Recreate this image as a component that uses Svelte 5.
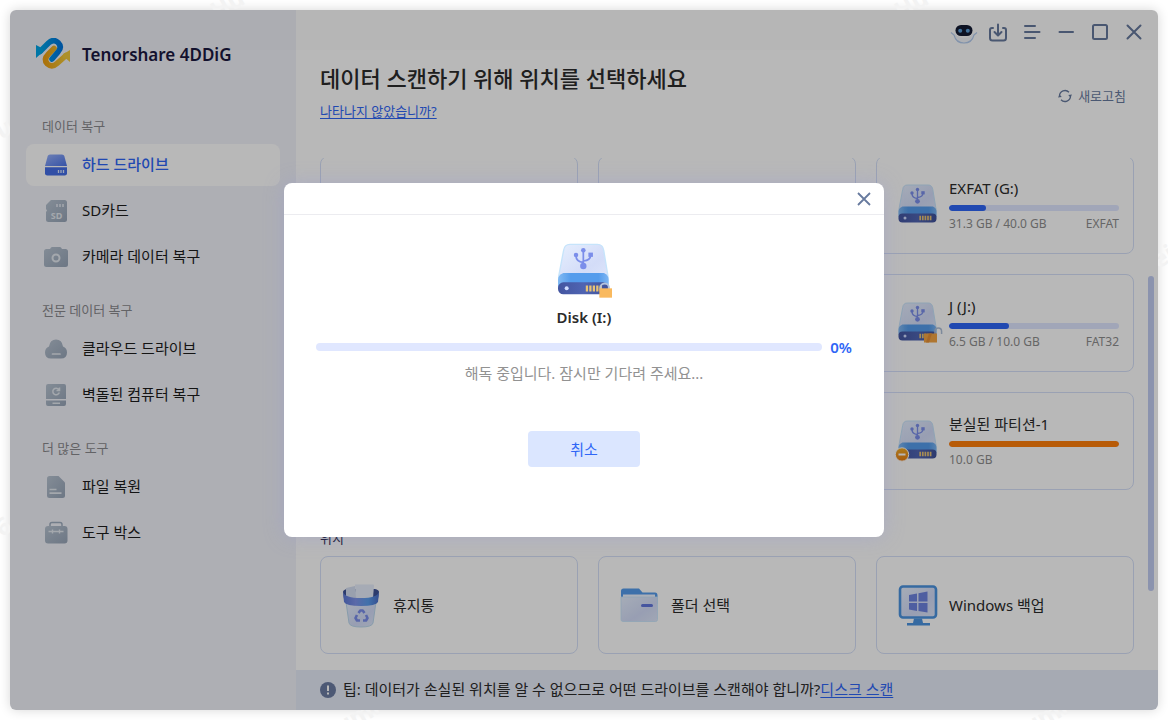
<svelte:head>
  <title>Tenorshare 4DDiG</title>
</svelte:head>

<script>
  const groups = [
    {
      label: '데이터 복구',
      items: [
        { icon: 'drive', text: '하드 드라이브' },
        { icon: 'sd', text: 'SD카드' },
        { icon: 'camera', text: '카메라 데이터 복구' }
      ]
    },
    {
      label: '전문 데이터 복구',
      items: [
        { icon: 'cloud', text: '클라우드 드라이브' },
        { icon: 'computer', text: '벽돌된 컴퓨터 복구' }
      ]
    },
    {
      label: '더 많은 도구',
      items: [
        { icon: 'file', text: '파일 복원' },
        { icon: 'toolbox', text: '도구 박스' }
      ]
    }
  ];

  // null keeps an empty cell in the grid
  const disks = [
    null,
    null,
    { name: 'EXFAT (G:)', size: '31.3 GB / 40.0 GB', fs: 'EXFAT', used: 22 },
    null,
    null,
    { name: 'J (J:)', size: '6.5 GB / 10.0 GB', fs: 'FAT32', used: 35, badge: 'unlocked' },
    null,
    null,
    { name: '분실된 파티션-1', size: '10.0 GB', fs: '', used: 100, badge: 'lost' }
  ];

  const locations = [
    { icon: 'bin', text: '휴지통' },
    { icon: 'folder', text: '폴더 선택' },
    { icon: 'windows', text: 'Windows 백업' }
  ];

  let active = 'drive';
  let decrypting = true;
  let progress = 0;

  function closeDialog() {
    decrypting = false;
  }
</script>

{#snippet drive(badge)}
  <svg class="drive" viewBox="0 0 42 42" aria-hidden="true">
    <path d="M10.5 1h20.5q4.200 0 4.800 4.500L39 25v6H2v-6L5.700 5.500Q6.300 1 10.500 1Z" fill="url(#glass)" stroke="#c6e4fb" stroke-width="1" />
    <path d="M5.500 22.500h30.500q3.500 1.500 3.500 5V33H1.500v-5.500q0-3.500 4-5Z" fill="url(#band)" />
    <rect x="1.500" y="29.500" width="38" height="9" rx="4" fill="url(#base)" />
    <circle cx="8" cy="34" r="1.500" fill="#cfdcff" />
    <path d="M23.200 31.800v4.500M25.800 31.800v4.500M28.400 31.800v4.500M31 31.800v4.500M33.600 31.800v4.500" stroke="#e8c274" stroke-width="1.700" />
    <g fill="none" stroke="#7b8eea" stroke-width="1.300">
      <path d="M20.500 5v11M20.500 14.500q-5.500-.5-5.500-5M20.500 13.500q5.500-.5 5.500-4.500" />
    </g>
    <g fill="#7b8eea">
      <circle cx="20.500" cy="17.300" r="2.400" />
      <circle cx="20.500" cy="5.500" r="1.700" />
      <circle cx="15" cy="9" r="1.700" />
      <rect x="24.300" y="7.200" width="3.400" height="3.200" />
    </g>
    {#if badge === 'locked'}
      <circle cx="36.500" cy="33.500" r="3.200" fill="none" stroke="#b4c3dd" stroke-width="1.500" />
      <rect x="32.500" y="34" width="9.500" height="7" fill="#f9b95e" />
    {:else if badge === 'unlocked'}
      <path d="M38 32v-2.500q0-3.500 3.300-3.500t3.300 3.500v2.500" fill="none" stroke="#aebfd8" stroke-width="1.500" />
      <rect x="27" y="31.500" width="13" height="9" fill="#f3a443" />
      <path d="M32 31.500h3l-3 9h-3Z" fill="#e58f37" />
    {:else if badge === 'lost'}
      <circle cx="5" cy="34.500" r="6.700" fill="url(#orange)" stroke="#fff" stroke-width="1" />
      <path d="M1.500 34.500h7" stroke="#fff" stroke-width="2" />
    {/if}
  </svg>
{/snippet}

{#snippet navIcon(name)}
  <svg width="26" height="26" viewBox="0 0 26 26" aria-hidden="true">
    {#if name === 'drive'}
      <path d="M7 2.500h12q1.800 0 2.300 1.500L24 14H2L4.700 4q.5-1.500 2.300-1.500Z" fill="url(#navtop)" />
      <path d="M2 15.200h22v6q0 2.300-2.300 2.300H4.300Q2 23.500 2 21.200Z" fill="#446ee6" />
      <path d="M15.500 18v3M18 18v3M20.500 18v3" stroke="#dce6ff" stroke-width="1.300" />
    {:else if name === 'sd'}
      <path d="M8 2h13.500Q24 2 24 4.500v17q0 2.500-2.500 2.500h-16Q3 24 3 21.500V14l1-1.500-1-1.500V7Z" fill="url(#slate)" />
      <path d="M14 6v3M17 6v3M20 6v3" stroke="#e4e9f0" stroke-width="1.500" />
      <text x="13.500" y="20.500" text-anchor="middle" class="sd">SD</text>
    {:else if name === 'camera'}
      <path d="M7 5l1-1.500q.5-.5 1-.5h8q.5 0 1 .5L19 5h3.500Q25 5 25 7.500v13q0 2.500-2.500 2.500h-19Q1 23 1 20.500v-13Q1 5 3.500 5Z" fill="url(#slate)" />
      <circle cx="13" cy="14" r="3.500" fill="none" stroke="#e4e9f0" stroke-width="2" />
    {:else if name === 'cloud'}
      <path d="M8 22.500q-6 0-6-6 0-4.500 4-6 1-7 7-7t7 7q4 1.500 4 6 0 6-6 6Z" fill="url(#slate)" />
      <path d="M9.500 18h7.500" stroke="#e4e9f0" stroke-width="1.700" stroke-linecap="round" />
    {:else if name === 'computer'}
      <path d="M5 2h16q2 0 2 2v13H3V4q0-2 2-2ZM3 18.500h20V22q0 2-2 2H5q-2 0-2-2Z" fill="url(#slate)" />
      <path d="M15.800 7.500a3.300 3.300 0 1 0 .5 3M16.500 5.500V8.500H13.500M9.500 21.200h7.500" fill="none" stroke="#e4e9f0" stroke-width="1.500" />
    {:else if name === 'file'}
      <path d="M6.500 2h9L22 8.500v13q0 2.500-2.500 2.500h-13Q4 24 4 21.500v-17Q4 2 6.500 2Z" fill="url(#slate)" />
      <path d="M6.500 15.500h7M6.500 19.200h12" stroke="#e4e9f0" stroke-width="1.700" />
    {:else if name === 'toolbox'}
      <path d="M7 6V4.500Q7 2.500 9 2.500h8q2 0 2 2V6" fill="none" stroke="#9fadbf" stroke-width="1.500" />
      <rect x="2" y="6" width="22.500" height="17.500" rx="3" fill="url(#slate)" />
      <path d="M5.500 11.500h15M9.500 9.500v4M16.500 9.500v4" stroke="#e4e9f0" stroke-width="1.400" />
    {/if}
  </svg>
{/snippet}

{#snippet locationIcon(name)}
  <svg class="drive" viewBox="0 0 42 42" aria-hidden="true">
    {#if name === 'bin'}
      <path d="M2 8q0-2 4-3h28q4 1 4 3l-1 7H3Z" fill="#3e5297" />
      <path d="M5 4l9-2 2 13H5Z" fill="#d5def2" />
      <path d="M14 .5h18q1 0 1 1L32 14H15Z" fill="#e6edfb" />
      <path d="M5 18h30l-3 21q-1 4-12 4T8 39Z" fill="url(#glass)" stroke="#bcd9ee" stroke-width="1" />
      <path d="M2 8q2 6 18 6t18-6l-1 10q-2 4-17 4T3 18Z" fill="url(#rim)" />
      <g fill="none" stroke="#7b8eea" stroke-width="2.600" stroke-linejoin="round">
        <path d="M17.500 29l1.800-2.500h2.400l1.800 2.500" />
        <path d="M25 31l1.500 3-1.500 2.500h-3" />
        <path d="M19 36.500h-3L14.500 34l1.500-3" />
      </g>
    {:else if name === 'folder'}
      <path d="M2 7q0-2.500 2.500-2.500H20l3.500 4H36q2.500 0 2.500 3V20H2Z" fill="#559cec" />
      <path d="M4 10.500h32v5H4Z" fill="#eef3ff" />
      <path d="M2 13h36.500v22.500q0 2-2 2H4q-2 0-2-2Z" fill="url(#glass)" stroke="#c6e4fb" stroke-width=".8" />
      <path d="M23.500 21.500h9" stroke="#6176dd" stroke-width="3" stroke-linecap="round" />
    {:else}
      <rect x="3" y="2.500" width="36" height="31" rx="3" fill="url(#glass)" stroke="#4c94e0" stroke-width="2.600" />
      <path d="M17 34.500h8l1 4.500h7v2.500H10V39h6Z" fill="#4c94e0" />
      <path d="M12 11l8-1.500v8h-8ZM21.500 9.200L30.500 7.500v10h-9ZM12 19h8v8l-8-1.500ZM21.500 19h9v9.500l-9-1.500Z" fill="#6d83df" />
    {/if}
  </svg>
{/snippet}

<svg class="defs" width="0" height="0" aria-hidden="true">
  <defs>
    <linearGradient id="glass" x1="0" y1="0" x2="1" y2="1">
      <stop offset="0" stop-color="#e6effe" />
      <stop offset=".6" stop-color="#d3dcf8" />
      <stop offset="1" stop-color="#dfe7fb" />
    </linearGradient>
    <linearGradient id="band" x1="0" y1="0" x2="1" y2="0">
      <stop offset="0" stop-color="#82baf3" />
      <stop offset=".25" stop-color="#559cec" />
      <stop offset=".8" stop-color="#559cec" />
      <stop offset="1" stop-color="#7db6f3" />
    </linearGradient>
    <linearGradient id="base" x1="0" y1="0" x2="1" y2="0">
      <stop offset="0" stop-color="#4355a0" />
      <stop offset=".5" stop-color="#4f64b2" />
      <stop offset="1" stop-color="#3f5199" />
    </linearGradient>
    <linearGradient id="rim" x1="0" y1="0" x2="1" y2="0">
      <stop offset="0" stop-color="#5b78d6" />
      <stop offset=".35" stop-color="#7e93ea" />
      <stop offset=".7" stop-color="#5a9ded" />
      <stop offset="1" stop-color="#4a6dc9" />
    </linearGradient>
    <linearGradient id="orange" x1="0" y1="0" x2="0" y2="1">
      <stop offset="0" stop-color="#f2ac25" />
      <stop offset="1" stop-color="#e77c11" />
    </linearGradient>
    <linearGradient id="navtop" x1="0" y1="0" x2="1" y2="1">
      <stop offset="0" stop-color="#98b2fb" />
      <stop offset="1" stop-color="#4c74e8" />
    </linearGradient>
    <linearGradient id="slate" x1="0" y1="0" x2="1" y2="1">
      <stop offset="0" stop-color="#b7c3d1" />
      <stop offset="1" stop-color="#97a5b8" />
    </linearGradient>
    <linearGradient id="logoblue" x1="0" y1="0" x2="1" y2="0">
      <stop offset="0" stop-color="#00a5e8" />
      <stop offset="1" stop-color="#0078e0" />
    </linearGradient>
    <linearGradient id="logogold" x1="0" y1="0" x2="1" y2="0">
      <stop offset="0" stop-color="#eda012" />
      <stop offset="1" stop-color="#f0c83a" />
    </linearGradient>
  </defs>
</svg>

<div class="desktop">
  <div class="watermark" aria-hidden="true">
    <span class="mark mark--a">Hu</span>
    <span class="mark mark--b">Hu</span>
    <span class="mark mark--c">u</span>
    <span class="mark mark--d">ei</span>
    <span class="mark mark--e">6</span>
    <span class="mark mark--f">umi</span>
    <span class="mark mark--g">umi</span>
  </div>

  <div class="window">
    <aside class="sidebar">
      <div class="brand">
        <svg width="36" height="34" viewBox="0 2 36 34" aria-hidden="true">
          <g fill="none" stroke-width="5.600" stroke-linecap="round">
            <path d="M18 12.500L12.500 18Q7 23.500 11.500 28q4.500 4 9.500-.5l9-8" stroke="url(#logogold)" />
            <path d="M4 15.500l8.500-8.500q5-4.500 9.500-.5 4.500 4.500 0 9.500l-6 7" stroke="url(#logoblue)" />
          </g>
          <path d="M0 9l3 1.500L7 13v3.500l-3 2L0 22Z" fill="#00a5e8" />
          <path d="M34 14v12l-3.500-3-3.500-1.500V18l3-1.500Z" fill="#f0c83a" />
        </svg>
        <span>Tenorshare 4DDiG</span>
      </div>
      <nav>
        {#each groups as group}
          <section class="group">
            <h2>{group.label}</h2>
            {#each group.items as item}
              <button
                type="button"
                class="nav-item"
                class:active={active === item.icon}
                on:click={() => (active = item.icon)}
              >
                {@render navIcon(item.icon)}
                <span>{item.text}</span>
              </button>
            {/each}
          </section>
        {/each}
      </nav>
    </aside>

    <main class="content">
      <div class="topbar">
        <button type="button" aria-label="Assistant">
          <svg width="28" height="24" viewBox="0 0 28 24">
            <path d="M2.500 12.500L4 14.500Q5.500 23.500 14 23.500T24 14.500l1.500-2-3 1.500Q20 18 14 18t-8.500-4Z" fill="#f4f7fd" />
            <path d="M1 12.500l3 2.500q2 8 10 8t10-8l3-2.500" fill="none" stroke="#b5cdf0" stroke-width="1.100" />
            <rect x="5.500" y="5" width="17" height="11" rx="5.500" fill="#141b33" />
            <circle cx="10.200" cy="10.700" r="2" fill="#5c9fd8" />
            <circle cx="17.800" cy="10.700" r="2" fill="#5c9fd8" />
          </svg>
        </button>
        <button type="button" aria-label="Download">
          <svg width="24" height="24" viewBox="0 0 24 24">
            <path d="M7 8H6q-2 0-2 2v8q0 2.500 2.500 2.500h11Q20 20.500 20 18v-8q0-2-2-2h-1M12 4.500v10.500M8.500 12l3.500 3.500 3.500-3.500" />
          </svg>
        </button>
        <button type="button" aria-label="Menu">
          <svg width="24" height="24" viewBox="0 0 24 24">
            <path d="M5 6h10M5 12h14.500M5 18h10" />
          </svg>
        </button>
        <button type="button" aria-label="Minimize">
          <svg width="24" height="24" viewBox="0 0 24 24"><path d="M5.500 12h13.500" /></svg>
        </button>
        <button type="button" aria-label="Maximize">
          <svg width="24" height="24" viewBox="0 0 24 24">
            <rect x="5" y="5" width="14" height="14" rx="1.500" />
          </svg>
        </button>
        <button type="button" aria-label="Close">
          <svg width="24" height="24" viewBox="0 0 24 24"><path d="M5.500 5.500l13 13M18.500 5.500l-13 13" /></svg>
        </button>
      </div>

      <header class="heading">
        <div>
          <h1>데이터 스캔하기 위해 위치를 선택하세요</h1>
          <a href="#help">나타나지 않았습니까?</a>
        </div>
        <button type="button" class="refresh">
          <svg width="14" height="14" viewBox="0 0 14 14" aria-hidden="true">
            <path d="M1.500 7a5.500 5.500 0 0 1 9.500-3.700M12.500 7A5.500 5.500 0 0 1 3 10.700" fill="none" stroke="#677a9e" stroke-width="1.300" />
            <path d="M0 8.500L1.500 5.500 3.800 8ZM14 5.500l-1.500 3L10.200 6Z" fill="#677a9e" />
          </svg>
          새로고침
        </button>
      </header>

      <div class="scroller">
        <div class="list">
          <div class="grid">
            {#each disks as disk}
              <article class="card">
                {#if disk}
                  {@render drive(disk.badge)}
                  <div class="info">
                    <h3>{disk.name}</h3>
                    <div class="bar">
                      <div class="bar__fill" class:lost={disk.badge === 'lost'} style="width: {disk.used}%"></div>
                    </div>
                    <p><span>{disk.size}</span><span>{disk.fs}</span></p>
                  </div>
                {/if}
              </article>
            {/each}
          </div>
          <h2 class="section-title">위치</h2>
          <div class="grid">
            {#each locations as location}
              <article class="card">
                {@render locationIcon(location.icon)}
                <h3>{location.text}</h3>
              </article>
            {/each}
          </div>
        </div>
        <div class="thumb"></div>
      </div>

      <footer class="tip">
        <svg width="16" height="16" viewBox="0 0 16 16" aria-hidden="true">
          <circle cx="8" cy="8" r="8" fill="#6b7ca3" />
          <path d="M8 3.500v5.500M8 10.500v2" stroke="#fff" stroke-width="2" />
        </svg>
        <p>팁: 데이터가 손실된 위치를 알 수 없으므로 어떤 드라이브를 스캔해야 합니까?<a href="#scan">디스크 스캔</a></p>
      </footer>
    </main>

    {#if decrypting}
      <div class="overlay">
        <div class="dialog" role="dialog" aria-modal="true" aria-labelledby="dialog-title">
          <div class="dialog__bar">
            <button type="button" aria-label="Close dialog" on:click={closeDialog}>
              <svg width="16" height="16" viewBox="0 0 16 16">
                <path d="M2 2l12 12M14 2L2 14" fill="none" stroke="#677a9e" stroke-width="1.800" />
              </svg>
            </button>
          </div>
          <div class="dialog__body">
            {@render drive('locked')}
            <h2 id="dialog-title">Disk (I:)</h2>
            <div class="progress">
              <div class="progress__track">
                <div class="progress__fill" style="width: {progress}%"></div>
              </div>
              <strong>{progress}%</strong>
            </div>
            <p>해독 중입니다. 잠시만 기다려 주세요...</p>
            <button type="button" class="cancel" on:click={closeDialog}>취소</button>
          </div>
        </div>
      </div>
    {/if}
  </div>
</div>

<style>
  :global(body) {
    background: #fff;
  }

  h1,
  h2,
  h3,
  p {
    margin: 0;
    font-weight: 400;
  }

  button {
    padding: 0;
    border: none;
    background: none;
    font: inherit;
    color: inherit;
    cursor: pointer;
  }

  a {
    color: #2f66f6;
    text-underline-offset: 2px;
  }

  .defs {
    position: absolute;
  }

  .desktop {
    position: relative;
    display: flex;
    box-sizing: border-box;
    min-height: 100vh;
    padding: 10px;
    overflow: hidden;
    font-family: 'Noto Sans', 'Noto Sans CJK KR', sans-serif;
    font-size: 15px;
    line-height: 20px;
    color: #2b2b2b;
  }

  .desktop::before {
    content: '';
    position: absolute;
    inset: 10px;
    border-radius: 6px;
    box-shadow: 0 0 12px rgba(0, 0, 0, 0.16);
  }

  .mark {
    position: absolute;
    font-size: 24px;
    font-weight: 700;
    line-height: 24px;
    color: #f3f3f3;
    transform: rotate(-30deg);
  }

  .mark--a {
    left: 210px;
    top: -8px;
  }

  .mark--b {
    left: 894px;
    top: -8px;
  }

  .mark--c {
    left: -4px;
    top: 116px;
  }

  .mark--d {
    right: -6px;
    top: 244px;
  }

  .mark--e {
    left: -4px;
    top: 514px;
  }

  .mark--f {
    left: 334px;
    bottom: -8px;
  }

  .mark--g {
    left: 1022px;
    bottom: -8px;
  }

  .window {
    position: relative;
    display: flex;
    flex: 1;
    border-radius: 6px;
    overflow: hidden;
    background: #fff;
  }

  .sidebar {
    flex: none;
    box-sizing: border-box;
    width: 286px;
    padding: 26px 16px;
    background: #f2f3fa;
  }

  .brand {
    display: flex;
    align-items: center;
    gap: 10px;
    height: 38px;
    padding-left: 10px;
    margin-bottom: 16px;
    font-size: 17px;
    font-weight: 600;
    color: #1b1841;
  }

  .group {
    display: flex;
    flex-direction: column;
    gap: 4px;
    padding-top: 26px;
  }

  .group + .group {
    padding-top: 22px;
  }

  .group h2 {
    padding: 0 16px;
    margin-bottom: 4px;
    font-size: 13px;
    color: #8a8a8e;
  }

  .nav-item {
    display: flex;
    align-items: center;
    gap: 13px;
    height: 42px;
    padding: 0 17px;
    border-radius: 8px;
    color: #1c1c1c;
  }

  .nav-item span {
    padding-bottom: 2px;
  }

  .nav-item.active {
    background: #fff;
    color: #2f66f6;
    font-weight: 500;
  }

  .sd {
    font-size: 9px;
    font-weight: 700;
    fill: #e4e9f0;
  }

  .content {
    display: flex;
    flex: 1;
    flex-direction: column;
    min-width: 0;
  }

  .topbar {
    display: flex;
    justify-content: flex-end;
    gap: 10px;
    padding: 10px 12px;
  }

  .topbar button {
    display: flex;
    justify-content: center;
    width: 24px;
    height: 24px;
  }

  .topbar svg {
    flex: none;
  }

  .topbar button:not(:first-child) svg {
    fill: none;
    stroke: #677a9e;
    stroke-width: 2;
    stroke-linecap: round;
    stroke-linejoin: round;
  }

  .heading {
    display: flex;
    justify-content: space-between;
    align-items: center;
    padding: 9px 32px 0 24px;
  }

  .heading h1 {
    margin-bottom: 8px;
    font-size: 22px;
    font-weight: 500;
    line-height: 30px;
  }

  .heading a {
    display: block;
    font-size: 13px;
  }

  .refresh {
    display: flex;
    align-items: center;
    gap: 6px;
    margin-top: 8px;
    font-size: 13px;
    color: #677a9e;
  }

  .scroller {
    position: relative;
    display: flex;
    flex: 1 1 0px;
    flex-direction: column;
    justify-content: flex-end;
    margin-top: 37px;
    min-height: 0;
    overflow: hidden;
  }

  .list {
    flex: none;
    padding: 0 24px 16px;
  }

  .grid {
    display: grid;
    grid-template-columns: repeat(3, minmax(0, 1fr));
    gap: 20px;
  }

  .section-title {
    margin: 38px 0 8px;
    font-size: 13px;
    color: #1b1841;
  }

  .card {
    display: flex;
    align-items: center;
    gap: 10px;
    box-sizing: border-box;
    height: 98px;
    padding: 0 14px 0 20px;
    border: 1px solid #d6e0f8;
    border-radius: 8px;
  }

  .card h3 {
    font-size: 15px;
  }

  .drive {
    flex: none;
    width: 42px;
    height: 42px;
    overflow: visible;
  }

  .info {
    flex: 1;
  }

  .bar {
    height: 6px;
    margin: 7px 0 4px;
    border-radius: 3px;
    background: #e0e7ff;
    overflow: hidden;
  }

  .bar__fill {
    height: 100%;
    border-radius: 3px;
    background: #2f66f6;
  }

  .bar__fill.lost {
    background: #ff7f0a;
  }

  .info p {
    display: flex;
    justify-content: space-between;
    font-size: 12px;
    line-height: 18px;
    color: #8e8e8e;
  }

  .thumb {
    position: absolute;
    top: 23%;
    right: 4px;
    width: 6px;
    height: 315px;
    border-radius: 3px;
    background: #c1ccf2;
  }

  .tip {
    display: flex;
    align-items: center;
    gap: 7px;
    height: 40px;
    padding: 0 24px;
    background: #e7ecf9;
  }

  .tip p {
    padding-bottom: 2px;
  }

  .overlay {
    position: absolute;
    inset: 0;
    display: grid;
    place-items: center;
    background: linear-gradient(rgba(0, 0, 0, 0.01), rgba(0, 0, 0, 0.01)) top / 100% 40px no-repeat rgba(0, 0, 0, 0.28);
  }

  .dialog {
    width: min(600px, 90%);
    border-radius: 8px;
    background: #fff;
    box-shadow: 0 0 20px rgba(150, 155, 215, 0.4);
  }

  .dialog__bar {
    display: flex;
    justify-content: flex-end;
    align-items: center;
    height: 31px;
    padding: 0 12px;
    border-bottom: 1px solid #ececf0;
  }

  .dialog__bar button {
    display: flex;
  }

  .dialog__body {
    display: flex;
    flex-direction: column;
    align-items: center;
    padding: 28px 32px 70px;
  }

  .dialog__body .drive {
    width: 56px;
    height: 56px;
  }

  .dialog__body h2 {
    margin: 8px 0 10px;
    font-size: 15px;
    font-weight: 600;
  }

  .progress {
    display: flex;
    align-items: center;
    align-self: stretch;
    gap: 8px;
  }

  .progress__track {
    flex: 1;
    height: 8px;
    border-radius: 4px;
    background: #e0e7ff;
    overflow: hidden;
  }

  .progress__fill {
    height: 100%;
    background: #2f66f6;
  }

  .progress strong {
    color: #2f66f6;
    font-weight: 600;
  }

  .dialog__body p {
    margin: 6px 0 48px;
    color: #929292;
  }

  .cancel {
    width: 112px;
    height: 36px;
    border-radius: 4px;
    background: #dbe6ff;
    color: #2f66f6;
  }
</style>
